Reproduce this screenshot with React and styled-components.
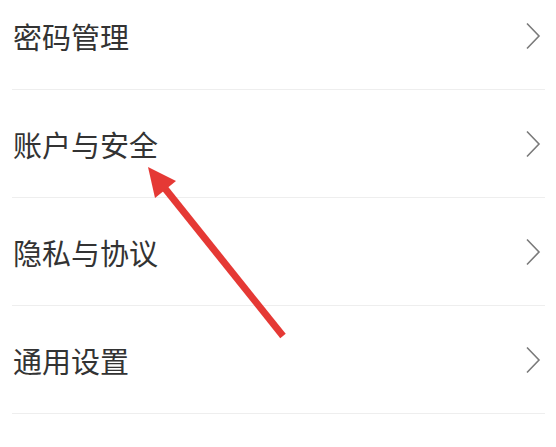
import styled, { createGlobalStyle } from "styled-components"

const GlobalStyle = createGlobalStyle`
  html, body {
    margin: 0;
    padding: 0;
    background: #ffffff;
    overflow: hidden;
  }
`;

const Page = styled.div`
  position: relative;
  width: 556px;
  height: 447px;
  overflow: hidden;
  background: #fff;
`;

const List = styled.div`
  display: flex;
  flex-direction: column;
  margin-top: -18px;
`;

const Row = styled.div`
  height: 107px;
  margin: 0 11px 0 12px;
  border-bottom: 1px solid #eeeeee;
  display: flex;
  align-items: center;
  justify-content: space-between;
`;

const Label = styled.span`
  font-family: "Noto Sans CJK SC", "Noto Sans", sans-serif;
  font-size: 29px;
  color: #333333;
  letter-spacing: 0px;
  margin-left: 1px;
`;

const Chevron = styled.svg`
  width: 16px;
  height: 28px;
  margin-right: 4px;
`;

const Arrow = styled.svg`
  position: absolute;
  left: 0;
  top: 0;
  pointer-events: none;
`;

const items = ["密码管理", "账户与安全", "隐私与协议", "通用设置"]

const App = () => {
  return (
    <Page>
      <GlobalStyle />
      <List>
        {items.map((t) => (
          <Row key={t}>
            <Label>{t}</Label>
            <Chevron viewBox="0 0 16 28">
              <polyline points="2,1.5 14,14 2,26.5" fill="none" stroke="#7a7a7a" strokeWidth="1.6" />
            </Chevron>
          </Row>
        ))}
      </List>
      <Arrow width="556" height="447">
        <line x1="283" y1="336" x2="163" y2="186" stroke="#e53935" strokeWidth="7" />
        <polygon points="148,167 176,181 155,198" fill="#e53935" />
      </Arrow>
    </Page>
  )
}

export default App
